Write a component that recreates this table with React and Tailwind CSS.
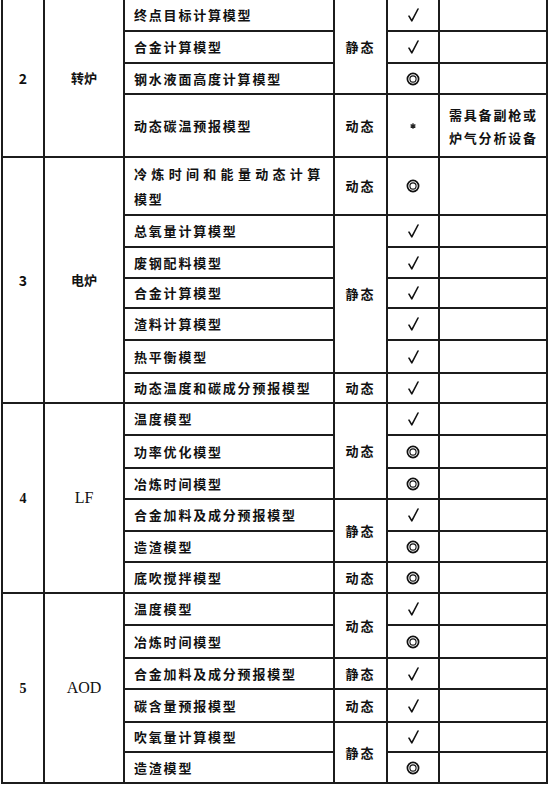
import React from "react";

const cjk = "font-['Noto_Sans_CJK_SC',sans-serif]";
const serif = "font-['Liberation_Serif',serif]";
const cell = "border-2 border-[#1c1c1c] p-0";

function Check() {
  return (
    <svg width="11" height="14" viewBox="0 0 11 14" className="mx-auto block">
      <path d="M1 8.2 L3.8 12.8 L10 1" fill="none" stroke="#111" strokeWidth="1.6" strokeLinecap="round" strokeLinejoin="round" />
    </svg>
  );
}

function Ring() {
  return (
    <svg width="14" height="14" viewBox="0 0 14 14" className="mx-auto block">
      <circle cx="7" cy="7" r="5.6" fill="none" stroke="#111" strokeWidth="1.7" />
      <circle cx="7" cy="7" r="3.1" fill="none" stroke="#111" strokeWidth="1.1" />
    </svg>
  );
}

function Star() {
  return (
    <svg width="6" height="6" viewBox="0 0 6 6" className="mx-auto block">
      <path d="M3 0.3 V5.7 M0.6 1.6 L5.4 4.4 M0.6 4.4 L5.4 1.6" stroke="#222" strokeWidth="1.3" />
    </svg>
  );
}

const marks = { c: <Check />, o: <Ring />, s: <Star /> };

const groups = [
  {
    no: "2",
    noFont: cjk,
    name: "转炉",
    nameFont: cjk,
    rows: [
      { h: "h-[31px]", model: "终点目标计算模型", mark: "c", type: "静态", span: 3 },
      { h: "h-[32px]", model: "合金计算模型", mark: "c" },
      { h: "h-[31px]", model: "钢水液面高度计算模型", mark: "o" },
      { h: "h-[63px]", model: "动态碳温预报模型", mark: "s", type: "动态", span: 1, remark: ["需具备副枪或", "炉气分析设备"] },
    ],
  },
  {
    no: "3",
    noFont: cjk,
    name: "电炉",
    nameFont: cjk,
    rows: [
      { h: "h-[58px]", model: ["冷炼时间和能量动态计算", "模型"], mark: "o", type: "动态", span: 1 },
      { h: "h-[32px]", model: "总氧量计算模型", mark: "c", type: "静态", span: 5 },
      { h: "h-[31px]", model: "废钢配料模型", mark: "c" },
      { h: "h-[30px]", model: "合金计算模型", mark: "c" },
      { h: "h-[32px]", model: "渣料计算模型", mark: "c" },
      { h: "h-[33px]", model: "热平衡模型", mark: "c" },
      { h: "h-[30px]", model: "动态温度和碳成分预报模型", mark: "c", type: "动态", span: 1 },
    ],
  },
  {
    no: "4",
    noFont: serif,
    name: "LF",
    nameFont: serif,
    rows: [
      { h: "h-[32px]", model: "温度模型", mark: "c", type: "动态", span: 3 },
      { h: "h-[33px]", model: "功率优化模型", mark: "o" },
      { h: "h-[31px]", model: "冶炼时间模型", mark: "o" },
      { h: "h-[32px]", model: "合金加料及成分预报模型", mark: "c", type: "静态", span: 2 },
      { h: "h-[31px]", model: "造渣模型", mark: "o" },
      { h: "h-[31px]", model: "底吹搅拌模型", mark: "o", type: "动态", span: 1 },
    ],
  },
  {
    no: "5",
    noFont: serif,
    name: "AOD",
    nameFont: serif,
    rows: [
      { h: "h-[32px]", model: "温度模型", mark: "c", type: "动态", span: 2 },
      { h: "h-[33px]", model: "冶炼时间模型", mark: "o" },
      { h: "h-[31px]", model: "合金加料及成分预报模型", mark: "c", type: "静态", span: 1 },
      { h: "h-[33px]", model: "碳含量预报模型", mark: "c", type: "动态", span: 1 },
      { h: "h-[30px]", model: "吹氧量计算模型", mark: "c", type: "静态", span: 2 },
      { h: "h-[31px]", model: "造渣模型", mark: "o" },
    ],
  },
];

function Model({ value }) {
  if (Array.isArray(value)) {
    return (
      <div className="pl-[9px] pr-[11px] leading-[25px]">
        <div className="text-justify [text-align-last:justify] tracking-[1.8px]">{value[0]}</div>
        <div className="tracking-[1.8px]">{value[1]}</div>
      </div>
    );
  }
  return <div className="pl-[9px] tracking-[1.8px] whitespace-nowrap">{value}</div>;
}

export default function App() {
  return (
    <div className="w-[550px] h-[786px] bg-white overflow-hidden">
      <table className={`table-fixed border-collapse w-[547px] ml-[1px] text-[13px] font-bold text-[#111] ${cjk}`}>
        <colgroup>
          <col className="w-[42px]" />
          <col className="w-[80px]" />
          <col className="w-[210px]" />
          <col className="w-[53px]" />
          <col className="w-[52px]" />
          <col className="w-[108px]" />
        </colgroup>
        <tbody>
          {groups.map((g, gi) =>
            g.rows.map((r, ri) => (
              <tr key={`${gi}-${ri}`} className={r.h}>
                {ri === 0 && (
                  <>
                    <td rowSpan={g.rows.length} className={`${cell} ${gi === 0 ? "border-t-0" : ""} text-center`}>
                      <span className={`${g.noFont} text-[14px]`}>{g.no}</span>
                    </td>
                    <td rowSpan={g.rows.length} className={`${cell} ${gi === 0 ? "border-t-0" : ""} text-center`}>
                      <span className={`${g.nameFont} ${g.nameFont === serif ? "font-normal text-[16px]" : ""}`}>{g.name}</span>
                    </td>
                  </>
                )}
                <td className={`${cell} ${gi === 0 && ri === 0 ? "border-t-0" : ""}`}>
                  <Model value={r.model} />
                </td>
                {r.type && (
                  <td rowSpan={r.span} className={`${cell} ${gi === 0 && ri === 0 ? "border-t-0" : ""} text-center tracking-[2px]`}>
                    {r.type}
                  </td>
                )}
                <td className={`${cell} ${gi === 0 && ri === 0 ? "border-t-0" : ""}`}>{marks[r.mark]}</td>
                <td className={`${cell} ${gi === 0 && ri === 0 ? "border-t-0" : ""}`}>
                  {r.remark && (
                    <div className="pl-[9px] leading-[23px] tracking-[1.8px] whitespace-nowrap">
                      {r.remark.map((t) => (
                        <div key={t}>{t}</div>
                      ))}
                    </div>
                  )}
                </td>
              </tr>
            ))
          )}
        </tbody>
      </table>
    </div>
  );
}
